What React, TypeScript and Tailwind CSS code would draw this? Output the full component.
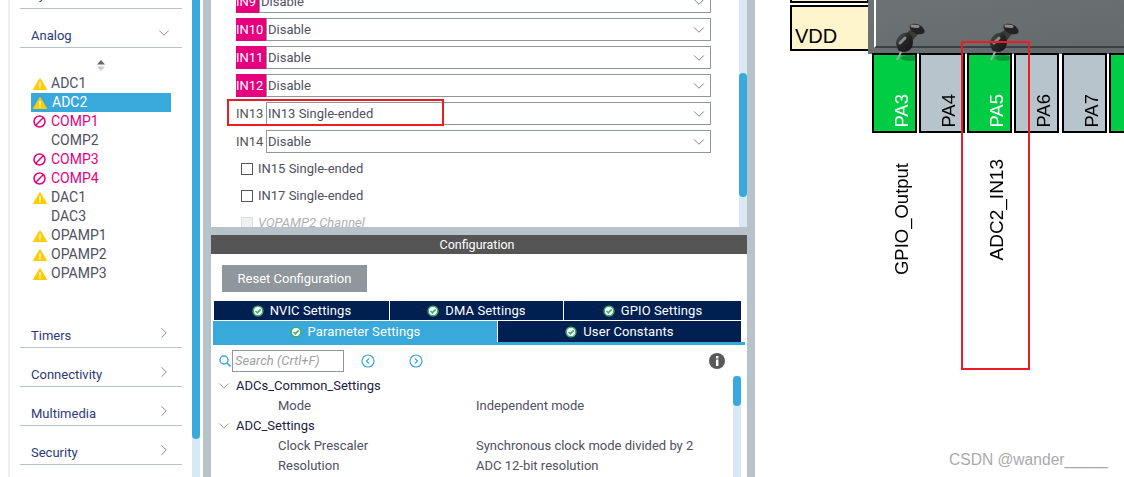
import { ChevronDown, ChevronRight } from "lucide-react";

type Periph = { name: string; status?: "warn" | "error"; active?: boolean };

const peripherals: Periph[] = [
  { name: "ADC1", status: "warn" },
  { name: "ADC2", status: "warn", active: true },
  { name: "COMP1", status: "error" },
  { name: "COMP2" },
  { name: "COMP3", status: "error" },
  { name: "COMP4", status: "error" },
  { name: "DAC1", status: "warn" },
  { name: "DAC3" },
  { name: "OPAMP1", status: "warn" },
  { name: "OPAMP2", status: "warn" },
  { name: "OPAMP3", status: "warn" },
];

function WarnIcon() {
  return (
    <svg width="14" height="12" viewBox="0 0 14 12" className="shrink-0">
      <path d="M7 0.5 L13.6 11.5 H0.4 Z" fill="#ffcc00" stroke="#ffcc00" strokeLinejoin="round" />
      <rect x="6.2" y="4" width="1.6" height="4.4" fill="#fff7d0" />
      <rect x="6.2" y="9" width="1.6" height="1.5" fill="#fff7d0" />
    </svg>
  );
}

function ErrorIcon() {
  return (
    <svg width="13" height="13" viewBox="0 0 13 13" className="shrink-0">
      <circle cx="6.5" cy="6.5" r="5.5" fill="none" stroke="#e6007e" strokeWidth="1.5" />
      <path d="M2.8 10.2 L10.2 2.8" stroke="#e6007e" strokeWidth="1.5" />
    </svg>
  );
}

function Section({ title, open }: { title: string; open?: boolean }) {
  return (
    <div className="mt-[14px] box-content flex h-[23px] shrink-0 items-center justify-between border-b border-[#b8c2c9] pb-px pl-[11px] pr-[9px]">
      <span className="pt-[2px] text-[13px] leading-4 text-[#2c3a78]">{title}</span>
      {open ? (
        <ChevronDown size={18} strokeWidth={1} className="-mt-1 text-[#666]" />
      ) : (
        <ChevronRight size={18} strokeWidth={1} className="-mt-1 text-[#666]" />
      )}
    </div>
  );
}

function Sidebar() {
  return (
    <div className="flex h-full w-[203px] shrink-0 bg-white">
      <div className="box-content h-full w-2 shrink-0 border-r-2 border-[#eeeeee]" />
      <div className="mr-[10px] flex h-full w-[172px] shrink-0 flex-col pl-[10px]">
        <div className="-mt-[19px] flex h-[28px] shrink-0 items-center border-b border-[#b8c2c9] pl-[11px]">
          <span className="text-[13px] text-[#2c3a78]">System Core</span>
        </div>
        <Section title="Analog" open />
        <div className="flex h-[26px] shrink-0 items-start justify-center pl-[1px] pr-[2px] pt-[12px]">
          <svg width="10" height="11" viewBox="0 0 10 11">
            <path d="M5 0 L9 4.5 H1 Z" fill="#666" />
            <path d="M5 11 L9 6.5 H1 Z" fill="#ccc" />
          </svg>
        </div>
        <div className="flex shrink-0 flex-col px-[11px]">
          {peripherals.map((p) => (
            <div
              key={p.name}
              className={
                p.active
                  ? "flex h-[19px] items-center gap-[6px] bg-[#39a9dc] pl-[2px] text-[14px] text-white"
                  : p.status === "error"
                    ? "flex h-[19px] items-center gap-[5px] pl-[2px] text-[14px] text-[#e6007e]"
                    : "flex h-[19px] items-center gap-[5px] pl-[2px] text-[14px] text-[#505060]"
              }
            >
              <span className="flex w-[13px] shrink-0 items-center justify-center">
                {p.status === "warn" && <WarnIcon />}
                {p.status === "error" && <ErrorIcon />}
              </span>
              <span>{p.name}</span>
            </div>
          ))}
        </div>
        <div className="h-[26px] shrink-0" />
        <Section title="Timers" />
        <Section title="Connectivity" />
        <Section title="Multimedia" />
        <Section title="Security" />
      </div>
      <div className="flex h-full w-2 shrink-0 flex-col bg-[#d8e8f5]">
        <div className="h-[439px] rounded-b-[4px] bg-[#39a9dc]" />
      </div>
      <div className="w-[3px] shrink-0 bg-white" />
    </div>
  );
}

function AdcRow({ label, value, alert }: { label: string; value: string; alert?: boolean }) {
  return (
    <div className="flex h-[23px] items-stretch">
      <div
        className={
          alert
            ? "flex w-[30px] shrink-0 items-center bg-[#e6007e] text-[13px] text-white"
            : "flex w-[30px] shrink-0 items-center text-[13px] text-[#555]"
        }
      >
        {label}
      </div>
      <div className="flex w-[445px] items-center justify-between border border-[#8f969c] bg-white pl-[1px] pr-[2px] text-[13px] text-[#505060]">
        <span>{value}</span>
        <ChevronDown size={18} strokeWidth={1.1} className="text-[#666]" />
      </div>
    </div>
  );
}

function CheckRow({ label }: { label: string }) {
  return (
    <div className="flex h-[27px] items-center gap-[5px] pl-[5px] text-[13px] text-[#505060]">
      <span className="h-3 w-3 shrink-0 border border-[#555] bg-white" />
      <span>{label}</span>
    </div>
  );
}

function CheckBadge() {
  return (
    <svg width="12" height="12" viewBox="0 0 12 12" className="shrink-0">
      <circle cx="6" cy="6" r="5.6" fill="#3fae6c" />
      <circle cx="6" cy="6" r="4" fill="#fff" />
      <path d="M3.6 6 L5.4 7.8 L8.6 4.4" fill="none" stroke="#3fae6c" strokeWidth="1.6" />
    </svg>
  );
}

function TabCell({ label, active, className }: { label: string; active?: boolean; className: string }) {
  return (
    <div
      className={`flex items-center justify-center gap-[6px] text-[13px] tracking-[0.1px] text-white ${
        active ? "bg-[#39a9dc]" : "bg-[#002052]"
      } ${className}`}
    >
      <CheckBadge />
      <span>{label}</span>
    </div>
  );
}

function TreeRow({ title }: { title: string }) {
  return (
    <div className="flex h-5 items-center gap-[3px] pl-[4px] text-[13px] text-[#1c2140]">
      <ChevronDown size={18} strokeWidth={1} className="text-[#777]" />
      <span>{title}</span>
    </div>
  );
}

function ParamRow({ name, value }: { name: string; value: string }) {
  return (
    <div className="flex h-5 items-center text-[13px] text-[#505060]">
      <span className="w-[265px] shrink-0 pl-[67px]">{name}</span>
      <span>{value}</span>
    </div>
  );
}

function CenterPanel() {
  return (
    <div className="flex h-full w-[552px] shrink-0 flex-col bg-[#b8c2c9] px-2">
      <div className="flex h-[227px] shrink-0 overflow-hidden bg-white">
        <div className="-mt-[10px] min-w-0 flex-1 pl-[25px]">
          <div className="flex h-[23px] items-stretch">
            <div className="flex w-[23px] shrink-0 items-center bg-[#e6007e] text-[13px] text-white">IN9</div>
            <div className="flex w-[452px] items-center justify-between border border-[#8f969c] pl-[1px] pr-[2px] text-[13px] text-[#505060]">
              <span>Disable</span>
              <ChevronDown size={18} strokeWidth={1.1} className="text-[#666]" />
            </div>
          </div>
          <div className="mt-[5px] flex flex-col gap-[5px]">
            <AdcRow label="IN10" value="Disable" alert />
            <AdcRow label="IN11" value="Disable" alert />
            <AdcRow label="IN12" value="Disable" alert />
            <AdcRow label="IN13" value="IN13 Single-ended" />
            <AdcRow label="IN14" value="Disable" />
          </div>
          <div className="mt-[2px]">
            <CheckRow label="IN15 Single-ended" />
            <CheckRow label="IN17 Single-ended" />
            <div className="flex h-[27px] items-center gap-[5px] pl-[5px] text-[13px] italic text-[#b0b0b0]">
              <span className="h-3 w-3 shrink-0 border border-[#ddd] bg-[#eef0f2]" />
              <span>VOPAMP2 Channel</span>
            </div>
          </div>
        </div>
        <div className="flex h-full w-2 shrink-0 flex-col bg-[#d8e8f5]">
          <div className="mt-[73px] h-[124px] rounded-[4px] bg-[#39a9dc]" />
        </div>
      </div>
      <div className="mt-2 flex h-[19px] shrink-0 items-center justify-center bg-[#545554] pr-[4px] pt-[2px] text-[12.5px] text-white">
        Configuration
      </div>
      <div className="min-h-0 flex-1 overflow-hidden bg-white">
        <div className="pl-[11px] pt-[11px]">
          <div className="flex h-[27px] w-[145px] items-center justify-center bg-[#8f969c] text-[13px] text-white">
            Reset Configuration
          </div>
        </div>
        <div className="ml-[3px] mt-[9px] flex h-[19px] w-[527px] gap-px">
          <TabCell label="NVIC Settings" className="w-[175px]" />
          <TabCell label="DMA Settings" className="w-[173px]" />
          <TabCell label="GPIO Settings" className="flex-1" />
        </div>
        <div className="ml-[2px] mt-px flex h-[21px] w-[528px] gap-px">
          <TabCell label="Parameter Settings" active className="w-[284px]" />
          <TabCell label="User Constants" className="flex-1" />
        </div>
        <div className="ml-[2px] h-[3px] w-[532px] bg-[#39a9dc]" />
        <div className="flex h-[31px] items-center pt-[1px]">
          <svg width="12" height="12" viewBox="0 0 12 12" className="ml-[8px] shrink-0">
            <circle cx="5" cy="5" r="4" fill="none" stroke="#39a9dc" strokeWidth="1.4" />
            <path d="M8 8 L11.5 11.5" stroke="#39a9dc" strokeWidth="1.6" />
          </svg>
          <div className="ml-[1px] flex h-[22px] w-[112px] items-center border border-[#8f969c] pl-[2px] text-[13px] italic text-[#a0a0a0]">
            Search (Crtl+F)
          </div>
          <svg width="14" height="14" viewBox="0 0 14 14" className="ml-[17px]">
            <circle cx="7" cy="7" r="6" fill="none" stroke="#39a9dc" strokeWidth="1.2" />
            <path d="M8 4.5 L5.5 7 L8 9.5" fill="none" stroke="#39a9dc" strokeWidth="1.2" />
          </svg>
          <svg width="14" height="14" viewBox="0 0 14 14" className="ml-[34px]">
            <circle cx="7" cy="7" r="6" fill="none" stroke="#39a9dc" strokeWidth="1.2" />
            <path d="M6 4.5 L8.5 7 L6 9.5" fill="none" stroke="#39a9dc" strokeWidth="1.2" />
          </svg>
          <svg width="16" height="16" viewBox="0 0 16 16" className="ml-[286px]">
            <circle cx="8" cy="8" r="8" fill="#595959" />
            <rect x="7" y="6.5" width="2.4" height="6.5" fill="#fff" />
            <rect x="7" y="3" width="2.4" height="2.4" fill="#fff" />
          </svg>
        </div>
        <div className="flex">
          <div className="min-w-0 flex-1">
            <TreeRow title="ADCs_Common_Settings" />
            <ParamRow name="Mode" value="Independent mode" />
            <TreeRow title="ADC_Settings" />
            <ParamRow name="Clock Prescaler" value="Synchronous clock mode divided by 2" />
            <ParamRow name="Resolution" value="ADC 12-bit resolution" />
          </div>
          <div className="mr-[6px] h-[110px] w-2 shrink-0 bg-[#d8e8f5]">
            <div className="h-[30px] rounded-[4px] bg-[#39a9dc]" />
          </div>
        </div>
      </div>
    </div>
  );
}

function Pushpin({ id, className }: { id: string; className: string }) {
  return (
    <svg width="36" height="44" viewBox="0 0 36 44" className={`absolute blur-[0.5px] ${className}`}>
      <defs>
        <linearGradient id={id} x1="0" y1="0" x2="1" y2="1">
          <stop offset="0" stopColor="#5c5c5c" />
          <stop offset="0.45" stopColor="#262626" />
          <stop offset="1" stopColor="#141414" />
        </linearGradient>
      </defs>
      <ellipse cx="16" cy="38" rx="8" ry="3" fill="#00602a" opacity="0.45" />
      <path d="M4 40 L9 30" stroke="#a2a6a8" strokeWidth="2" />
      <path d="M12 14 L20 8 L26 13 L20 20 Z" fill="#3a3a3a" />
      <path d="M3 24 C3 17 9 12 15 13 C20 14 21 22 19 27 C16 33 8 33 5 30 Z" fill={`url(#${id})`} />
      <path d="M7 23 L12 18" stroke="#8a8a8a" strokeWidth="3" strokeLinecap="round" />
      <ellipse cx="24" cy="9" rx="8" ry="4.6" transform="rotate(25 24 9)" fill="#232323" />
      <path d="M19 6 L25 6.5" stroke="#8d8d8d" strokeWidth="3" strokeLinecap="round" />
    </svg>
  );
}

function McuPin({ label, on, className }: { label: string; on?: boolean; className: string }) {
  return (
    <div
      className={`flex h-[80px] shrink-0 items-end justify-center border-2 border-black pb-[3px] pl-[14px] ${
        on ? "bg-[#00cc44] text-white" : "bg-[#b8c4cc] text-black"
      } ${className}`}
    >
      <span className="rotate-180 text-[18.5px] leading-[18px] [writing-mode:vertical-rl]">{label}</span>
    </div>
  );
}

function Pinout() {
  return (
    <div className="relative h-full min-w-0 flex-1 overflow-hidden bg-white font-['Liberation_Sans',sans-serif]">
      <div className="absolute left-[35px] top-[-10px] h-[13px] w-[79px] border-2 border-black bg-[#fff5cc]" />
      <div className="absolute left-[35px] top-[5px] flex h-[46px] w-[80px] items-end border-2 border-black bg-[#fff5cc] pb-[1px] pl-[3px] text-[20px] leading-6 text-black">
        VDD
      </div>
      <div className="absolute left-[113px] top-[-10px] h-[64px] w-[290px] bg-gradient-to-br from-[#6e7375] to-[#63686a] pb-[6px] pl-[6px]">
        <div className="h-full w-full border-b-2 border-l-2 border-b-[#3c3f41] border-l-white" />
      </div>
      <div className="absolute left-[117px] top-[53px] flex w-[300px]">
        <McuPin label="PA3" on className="w-[45px]" />
        <McuPin label="PA4" className="ml-[2px] w-[46px]" />
        <McuPin label="PA5" on className="ml-[2px] w-[45px]" />
        <McuPin label="PA6" className="ml-[2px] w-[45px]" />
        <McuPin label="PA7" className="ml-[3px] w-[45px]" />
        <div className="ml-[2px] h-[80px] w-[30px] shrink-0 border-2 border-black bg-[#00cc44]" />
      </div>
      <Pushpin id="pinA" className="left-[138px] top-[20px]" />
      <Pushpin id="pinB" className="left-[232px] top-[20px]" />
      <div className="absolute left-[137px] top-[163px] rotate-180 text-[18.5px] leading-5 text-black [writing-mode:vertical-rl]">
        GPIO_Output
      </div>
      <div className="absolute left-[232px] top-[159px] rotate-180 text-[19px] leading-5 text-black [writing-mode:vertical-rl]">
        ADC2_IN13
      </div>
      <div className="absolute left-[194px] top-[452px] text-[15.6px] leading-4 text-[#aaaaaa]">
        CSDN @wander_____
      </div>
    </div>
  );
}

export default function App() {
  return (
    <div className="relative flex h-[477px] w-[1124px] overflow-hidden bg-white font-['Roboto',sans-serif]">
      <Sidebar />
      <CenterPanel />
      <Pinout />
      {/* red markup rectangles drawn over the shot */}
      <div className="pointer-events-none absolute left-[227px] top-[99px] h-[27px] w-[217px] border-2 border-[#ed1c24]" />
      <div className="pointer-events-none absolute left-[961px] top-[41px] h-[329px] w-[69px] border-2 border-[#ed1c24]" />
    </div>
  );
}
